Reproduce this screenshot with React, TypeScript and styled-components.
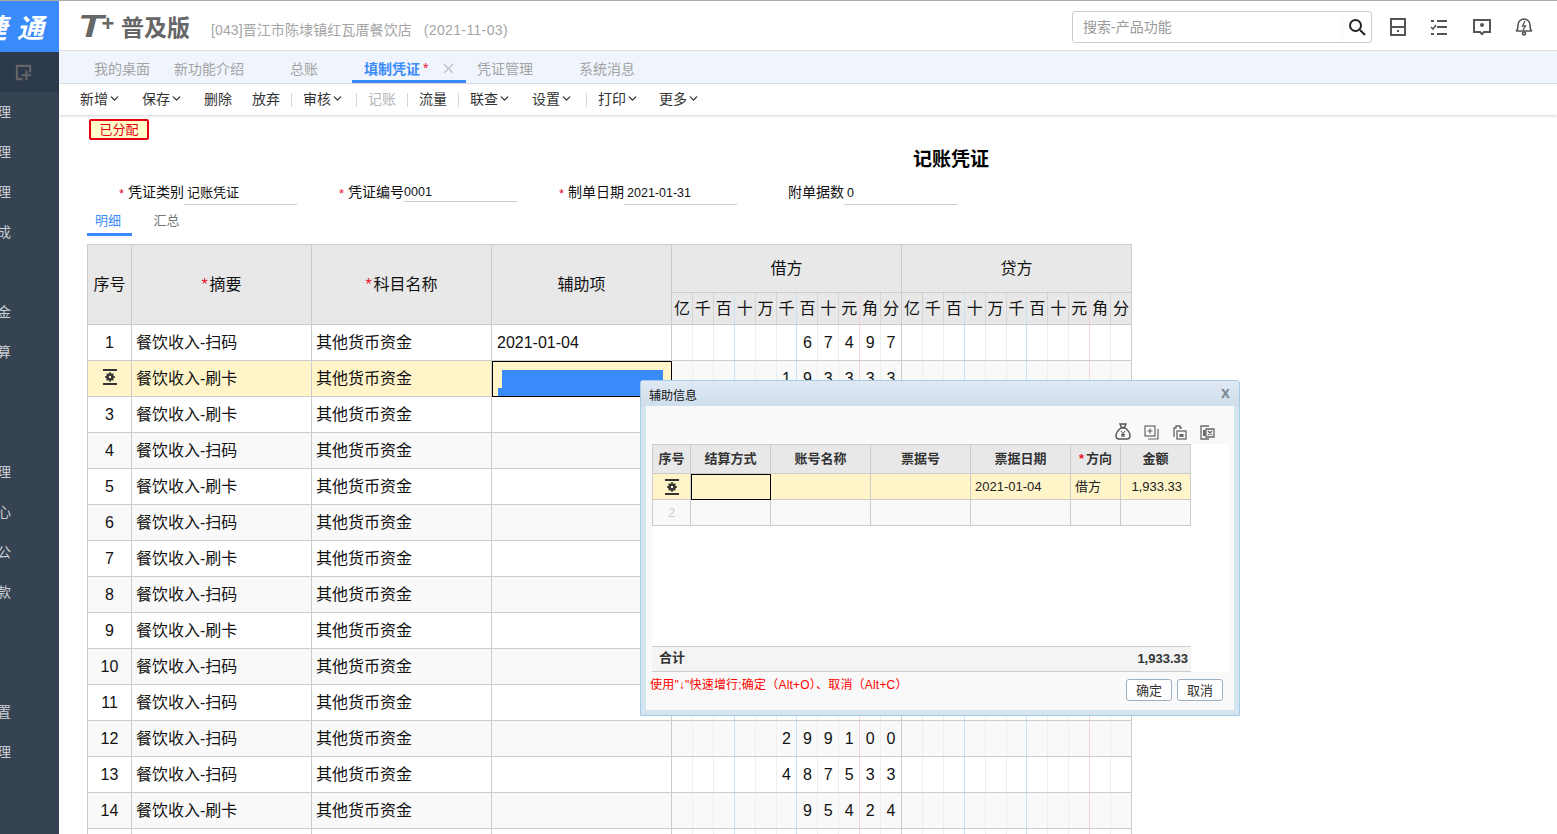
import React from "react"
import styled, { createGlobalStyle } from "styled-components"
import { ChevronDown, X } from "lucide-react"

const FONT = `"Liberation Sans", "Noto Sans CJK SC", sans-serif`
const BLUE = "#3a8bfa"

const GlobalStyle = createGlobalStyle`
	html, body {
		margin: 0;
		padding: 0;
		background: #fff;
		font-family: ${FONT};
		overflow: hidden;
	}
	* {
		box-sizing: border-box;
	}
`

const SIDE_ITEMS = ["理", "理", "理", "成", "", "金", "算", "", "", "理", "心", "公", "款", "", "", "置", "理"]

const TABS = [
	{ label: "我的桌面", width: 81, pad: 10 },
	{ label: "新功能介绍", width: 115, pad: 9 },
	{ label: "总账", width: 72, pad: 10 },
	{ label: "填制凭证", width: 114, pad: 12, active: true },
	{ label: "凭证管理", width: 101, pad: 11 },
	{ label: "系统消息", width: 100, pad: 12 },
]

const TOOLS = [
	{ label: "新增", width: 62, menu: true },
	{ label: "保存", width: 62, menu: true },
	{ label: "删除", width: 48 },
	{ label: "放弃", width: 39, sep: true },
	{ label: "审核", width: 53, menu: true, sep: true },
	{ label: "记账", width: 39, off: true, sep: true },
	{ label: "流量", width: 39, sep: true },
	{ label: "联查", width: 62, menu: true },
	{ label: "设置", width: 54, menu: true, sep: true },
	{ label: "打印", width: 61, menu: true },
	{ label: "更多", width: 50, menu: true },
]

const UNITS = ["亿", "千", "百", "十", "万", "千", "百", "十", "元", "角", "分"]

const ROWS = [
	{ no: "1", text: "餐饮收入-扫码", aux: "2021-01-04", debit: "67497" },
	{ no: "2", text: "餐饮收入-刷卡", debit: "193333", current: true },
	{ no: "3", text: "餐饮收入-刷卡" },
	{ no: "4", text: "餐饮收入-扫码" },
	{ no: "5", text: "餐饮收入-刷卡" },
	{ no: "6", text: "餐饮收入-扫码" },
	{ no: "7", text: "餐饮收入-刷卡" },
	{ no: "8", text: "餐饮收入-扫码" },
	{ no: "9", text: "餐饮收入-刷卡" },
	{ no: "10", text: "餐饮收入-扫码" },
	{ no: "11", text: "餐饮收入-扫码" },
	{ no: "12", text: "餐饮收入-扫码", debit: "299100" },
	{ no: "13", text: "餐饮收入-扫码", debit: "487533" },
	{ no: "14", text: "餐饮收入-刷卡", debit: "95424" },
	{ no: "15", text: "餐饮收入-扫码" },
]

const digitsOf = (value?: string) => {
	const cells: string[] = new Array(11).fill("")
	if (!value) return cells
	value.split("").forEach((d, i) => {
		cells[11 - value.length + i] = d
	})
	return cells
}

const lineColor = (index: number, base: string) => {
	if (index === 10) return "#ccc"
	if (index === 2 || index === 5) return "#c6e3f3"
	if (index === 8) return "#f4d6d8"
	return base
}

const RowMark = () => (
	<svg width="14" height="16" viewBox="0 0 14 16">
		<rect x="0" y="0" width="14" height="2" fill="#333" />
		<rect x="0" y="14" width="14" height="2" fill="#333" />
		<circle cx="7" cy="8" r="3.8" fill="#333" />
		<circle cx="7" cy="8" r="1.2" fill="#fff5c9" />
		<path d="M7 3v2M7 11v2M2 8h2M10 8h2M3.6 4.6 5 6M9 10l1.4 1.4M10.4 4.6 9 6M5 10l-1.4 1.4" stroke="#333" strokeWidth="1.3" />
	</svg>
)

const App: React.FC = () => {
	return (
		<Page>
			<GlobalStyle />
			<Sidebar>
				<Brand>
					<BrandText>捷</BrandText>
					<BrandText>通</BrandText>
				</Brand>
				<SideTop>
					<svg width="17" height="17" viewBox="0 0 18 18" fill="none" stroke="#666" strokeWidth="2.2">
						<path d="M8 16H2V2h14v7" />
						<path d="M12 7v10M7 12h10" />
					</svg>
				</SideTop>
				{SIDE_ITEMS.map((item, i) => (
					<SideItem key={i}>{item}</SideItem>
				))}
			</Sidebar>

			<Main>
				<Header>
					<LogoMark>T</LogoMark>
					<LogoPlus>+</LogoPlus>
					<LogoName>普及版</LogoName>
					<Company>
						[043]晋江市陈埭镇红瓦厝餐饮店&nbsp;&nbsp;&nbsp;<CompanyDate>(2021-11-03)</CompanyDate>
					</Company>
					<Search>
						<SearchHint>搜索-产品功能</SearchHint>
						<SearchButton>
							<svg width="18" height="18" viewBox="0 0 18 18" fill="none" stroke="#222" strokeWidth="2">
								<circle cx="7.5" cy="7.5" r="5.5" />
								<path d="m12 12 5 5" />
							</svg>
						</SearchButton>
					</Search>
					<HeaderIcons>
						<svg width="16" height="18" viewBox="0 0 16 18" fill="none" stroke="#555" strokeWidth="2">
							<rect x="1" y="1" width="14" height="16" />
							<path d="M1 9h14" />
							<rect x="7" y="12" width="2" height="2" fill="#555" stroke="none" />
						</svg>
						<svg width="18" height="18" viewBox="0 0 18 18" fill="none" stroke="#555" strokeWidth="2">
							<path d="M1 3h3M7 3h10M7 9h10M7 16h10M1 16h3" />
							<path d="m1 9 2 2 3-4" strokeWidth="1.5" />
						</svg>
						<svg width="18" height="18" viewBox="0 0 18 18" fill="none" stroke="#555" strokeWidth="2">
							<path d="M1 2h16v12h-6l-2 2-2-2H1z" />
							<circle cx="9" cy="7" r="2" fill="#555" stroke="none" />
						</svg>
						<svg width="18" height="19" viewBox="0 0 18 19" fill="none" stroke="#555" strokeWidth="1.6">
							<path d="M1 14c2-1 2-3 2-6a6 6 0 0 1 12 0c0 3 0 5 2 6z" />
							<path d="M10 4 7.5 9h3L8 13" strokeWidth="1.3" />
							<circle cx="9" cy="16.5" r="1.5" />
						</svg>
					</HeaderIcons>
				</Header>

				<TabBar>
					{TABS.map((tab) => (
						<Tab key={tab.label} $width={tab.width} $pad={tab.pad} $active={tab.active}>
							{tab.label}
							{tab.active && (
								<>
									<TabStar>*</TabStar>
									<TabClose>
										<X size={17} strokeWidth={1.5} color="#bbb" />
									</TabClose>
								</>
							)}
						</Tab>
					))}
				</TabBar>

				<Toolbar>
					{TOOLS.map((tool) => (
						<React.Fragment key={tool.label}>
							<Tool $width={tool.width} $off={tool.off}>
								<ToolLabel>{tool.label}</ToolLabel>
								{tool.menu && <ChevronDown size={13} strokeWidth={2.4} color="#333" />}
							</Tool>
							{tool.sep && <ToolSep />}
						</React.Fragment>
					))}
				</Toolbar>

				<Content>
					<StatusBadge>已分配</StatusBadge>
					<VoucherTitle>记账凭证</VoucherTitle>
					<FormRow>
						<Field $width={220}>
							<FieldStar>*</FieldStar>
							<FieldLabel>凭证类别</FieldLabel>
							<FieldValue>记账凭证</FieldValue>
						</Field>
						<Field $width={220}>
							<FieldStar>*</FieldStar>
							<FieldLabel>凭证编号</FieldLabel>
							<FieldValue $small $raised>0001</FieldValue>
						</Field>
						<Field $width={229}>
							<FieldStar>*</FieldStar>
							<FieldLabel>制单日期</FieldLabel>
							<FieldValue $small>2021-01-31</FieldValue>
						</Field>
						<Field $width={170}>
							<FieldLabel>附单据数</FieldLabel>
							<FieldValue $small>0</FieldValue>
						</Field>
					</FormRow>
					<DetailTabs>
						<DetailTab $active>明细</DetailTab>
						<DetailTab>汇总</DetailTab>
					</DetailTabs>

					<VoucherTable>
						<colgroup>
							<col style={{ width: 44 }} />
							<col style={{ width: 180 }} />
							<col style={{ width: 180 }} />
							<col style={{ width: 180 }} />
							{[...UNITS, ...UNITS].map((_, i) => (
								<col key={i} style={{ width: 230 / 11 }} />
							))}
						</colgroup>
						<thead>
							<HeadRow $height={48}>
								<HeadCell rowSpan={2}>序号</HeadCell>
								<HeadCell rowSpan={2}>
									<Star>*</Star>摘要
								</HeadCell>
								<HeadCell rowSpan={2}>
									<Star>*</Star>科目名称
								</HeadCell>
								<HeadCell rowSpan={2}>辅助项</HeadCell>
								<HeadCell colSpan={11}>借方</HeadCell>
								<HeadCell colSpan={11}>贷方</HeadCell>
							</HeadRow>
							<HeadRow $height={32}>
								{[...UNITS, ...UNITS].map((unit, i) => (
									<UnitCell key={i} $index={i % 11}>
										{unit}
									</UnitCell>
								))}
							</HeadRow>
						</thead>
						<tbody>
							{ROWS.map((row, r) => (
								<BodyRow key={row.no} $current={row.current} $even={r % 2 === 1}>
									<NoCell>{row.current ? <RowMark /> : row.no}</NoCell>
									<TextCell>{row.text}</TextCell>
									<TextCell>其他货币资金</TextCell>
									{row.current ? (
										<ActiveCell>
											<Selection />
										</ActiveCell>
									) : (
										<DateCell>{row.aux}</DateCell>
									)}
									{digitsOf(row.debit).map((d, i) => (
										<DigitCell key={i} $index={i} $even={r % 2 === 1}>
											{d}
										</DigitCell>
									))}
									{digitsOf().map((d, i) => (
										<DigitCell key={i} $index={i} $even={r % 2 === 1}>
											{d}
										</DigitCell>
									))}
								</BodyRow>
							))}
						</tbody>
					</VoucherTable>
				</Content>
			</Main>

			<Dialog>
				<DialogTitle>
					辅助信息
					<DialogClose>x</DialogClose>
				</DialogTitle>
				<DialogBody>
					<DialogTools>
						<svg width="16" height="17" viewBox="0 0 16 17" fill="none" stroke="#555" strokeWidth="1.4">
							<path d="M5 1h6L9.5 4.5h-3z" />
							<path d="M6 5C3 7 1 10 1 13c0 2 1 3 3 3h8c2 0 3-1 3-3 0-3-2-6-5-8z" />
							<path d="m6 8 2 2.5L10 8M8 10.5V14M6 11.5h4M6 13h4" strokeWidth="1" />
						</svg>
						<svg width="15" height="15" viewBox="0 0 15 15" fill="none" stroke="#666" strokeWidth="1.2">
							<rect x="1" y="1" width="10" height="10" />
							<path d="M4 14h10V4M6 3.5v5M3.5 6h5" />
						</svg>
						<svg width="15" height="15" viewBox="0 0 15 15" fill="none" stroke="#666" strokeWidth="1.3">
							<path d="M2 12V3h2V1h4v2h2" />
							<rect x="5" y="6" width="9" height="8" />
							<rect x="7.5" y="9" width="4" height="3" fill="#666" stroke="none" />
						</svg>
						<svg width="15" height="15" viewBox="0 0 15 15" fill="none" stroke="#666" strokeWidth="1.3">
							<path d="M9 1H1v13h8" />
							<rect x="3" y="5" width="2.5" height="6" fill="#666" stroke="none" />
							<path d="M6 4h8v8H6zM8 6l4 4M12 6l-4 4" />
						</svg>
					</DialogTools>
					<GridPanel>
						<DialogTable>
							<colgroup>
								<col style={{ width: 38 }} />
								<col style={{ width: 80 }} />
								<col style={{ width: 100 }} />
								<col style={{ width: 100 }} />
								<col style={{ width: 100 }} />
								<col style={{ width: 50 }} />
								<col style={{ width: 70 }} />
							</colgroup>
							<thead>
								<tr>
									<DialogHead>序号</DialogHead>
									<DialogHead>结算方式</DialogHead>
									<DialogHead>账号名称</DialogHead>
									<DialogHead>票据号</DialogHead>
									<DialogHead>票据日期</DialogHead>
									<DialogHead>
										<Star>*</Star>方向
									</DialogHead>
									<DialogHead>金额</DialogHead>
								</tr>
							</thead>
							<tbody>
								<DialogRow $current>
									<DialogCell $center>
										<RowMark />
									</DialogCell>
									<DialogCell $focus />
									<DialogCell />
									<DialogCell />
									<DialogCell>2021-01-04</DialogCell>
									<DialogCell $cjk>借方</DialogCell>
									<DialogCell $right>1,933.33</DialogCell>
								</DialogRow>
								<DialogRow>
									<DialogCell $center $muted>2</DialogCell>
									<DialogCell />
									<DialogCell />
									<DialogCell />
									<DialogCell />
									<DialogCell />
									<DialogCell />
								</DialogRow>
							</tbody>
						</DialogTable>
						<Summary>
							<SummaryLabel>合计</SummaryLabel>
							<SummaryValue>1,933.33</SummaryValue>
						</Summary>
					</GridPanel>
					<DialogFooter>
						<HintText>使用"↓"快速增行;确定（Alt+O）、取消（Alt+C）</HintText>
						<DialogButton>确定</DialogButton>
						<DialogButton>取消</DialogButton>
					</DialogFooter>
				</DialogBody>
			</Dialog>
		</Page>
	)
}

export default App

const Page = styled.div`
	position: relative;
	display: flex;
	width: 1557px;
	height: 834px;
	overflow: hidden;
	background: #fff;
	border-top: 1px solid #aaa;
`

const Sidebar = styled.aside`
	flex: 0 0 59px;
	width: 59px;
	background: #364352;
	overflow: hidden;
`

const Brand = styled.div`
	display: flex;
	justify-content: flex-end;
	align-items: center;
	gap: 10px;
	height: 51px;
	padding-right: 15px;
	background: ${BLUE};
	overflow: hidden;
`

const BrandText = styled.span`
	flex: none;
	color: #fff;
	font-size: 27px;
	font-weight: 700;
	font-style: italic;
`

const SideTop = styled.div`
	display: flex;
	justify-content: center;
	align-items: center;
	height: 40px;
	padding-right: 13px;
	background: #2d3a4b;
`

const SideItem = styled.div`
	height: 40px;
	margin-left: -3px;
	color: #c9ced4;
	font-size: 14px;
	line-height: 40px;
`

const Main = styled.main`
	flex: 1;
	min-width: 0;
	display: flex;
	flex-direction: column;
`

const Header = styled.header`
	flex: none;
	display: flex;
	align-items: center;
	height: 50px;
	padding: 2px 0 0 19px;
	border-bottom: 1px solid #ddd;
`

const LogoMark = styled.span`
	width: 23px;
	margin-bottom: 1px;
	color: #666;
	font-size: 32px;
	font-weight: 700;
	font-style: italic;
	font-family: "Liberation Sans", sans-serif;
	transform: scaleX(1.3);
	transform-origin: left center;
`

const LogoPlus = styled.span`
	width: 20px;
	margin: -5px 0 0 0;
	color: #666;
	font-size: 22px;
	font-weight: 700;
	font-style: italic;
`

const LogoName = styled.span`
	width: 90px;
	margin-bottom: 2px;
	color: #666;
	font-size: 23px;
	font-weight: 700;
`

const Company = styled.span`
	margin-top: 4px;
	color: #a5a5a5;
	font-size: 14px;
	letter-spacing: 0.1px;
	white-space: nowrap;
`

const CompanyDate = styled.span`
	letter-spacing: 0.35px;
`

const Search = styled.div`
	display: flex;
	align-items: center;
	width: 300px;
	height: 32px;
	margin-left: auto;
	border: 1px solid #ccc;
	border-radius: 3px;
`

const SearchHint = styled.span`
	flex: 1;
	padding: 0 0 2px 10px;
	color: #999;
	font-size: 14px;
`

const SearchButton = styled.div`
	display: flex;
	justify-content: center;
	align-items: center;
	width: 29px;
	height: 100%;
	border-left: 1px solid #f6f6f6;
`

const HeaderIcons = styled.div`
	display: flex;
	align-items: center;
	justify-content: space-between;
	width: 143px;
	margin: 0 24px 0 18px;
`

const TabBar = styled.nav`
	flex: none;
	display: flex;
	height: 33px;
	padding-left: 25px;
	background: #f0f5fd;
	border-bottom: 1px solid #e2e2e2;
`

const Tab = styled.div<{ $width: number; $pad: number; $active?: boolean }>`
	position: relative;
	display: flex;
	align-items: center;
	width: ${(p) => p.$width}px;
	height: 32px;
	padding: 5px 0 0 ${(p) => p.$pad}px;
	color: ${(p) => (p.$active ? BLUE : "#a3a3a3")};
	font-size: 14px;
	font-weight: ${(p) => (p.$active ? 700 : 400)};
	white-space: nowrap;
	border-bottom: 3px solid ${(p) => (p.$active ? BLUE : "transparent")};

	& + &::before {
		content: "";
		position: absolute;
		left: 0;
		top: 9px;
		height: 17px;
		border-left: 1px solid #dfe3e8;
	}
`

const TabStar = styled.span`
	margin-left: 3px;
	color: #e8102a;
	font-weight: 400;
`

const TabClose = styled.span`
	display: flex;
	margin-left: 12px;
`

const Toolbar = styled.div`
	position: relative;
	z-index: 1;
	flex: none;
	display: flex;
	align-items: center;
	height: 31px;
	padding-left: 21px;
	background: #fff;
	box-shadow: 0 1px 3px rgba(0, 0, 0, 0.18);
`

const Tool = styled.div<{ $width: number; $off?: boolean }>`
	display: flex;
	align-items: center;
	width: ${(p) => p.$width}px;
	padding-bottom: 2px;
	color: ${(p) => (p.$off ? "#b5b5b5" : "#333")};
	font-size: 14px;
	white-space: nowrap;
`

const ToolLabel = styled.span`
	margin-bottom: 2px;
`

const ToolSep = styled.span`
	width: 1px;
	height: 14px;
	margin-right: 11px;
	background: #d5d5d5;
`

const Content = styled.div`
	flex: 1;
	min-height: 0;
	padding: 4px 0 0 28px;
	overflow: hidden;
`

const StatusBadge = styled.div`
	width: 60px;
	height: 21px;
	margin-left: 2px;
	border: 2px solid #e60012;
	border-radius: 2px;
	background: #ffffcc;
	color: #e60012;
	font-size: 13px;
	line-height: 17px;
	text-align: center;
`

const VoucherTitle = styled.h1`
	width: 1728px;
	margin: 8px 0 0;
	height: 24px;
	color: #000;
	font-size: 19px;
	font-weight: 700;
	line-height: 24px;
	text-align: center;
`

const FormRow = styled.div`
	display: flex;
	align-items: flex-end;
	height: 33px;
	padding-left: 32px;
`

const Field = styled.div<{ $width: number }>`
	display: flex;
	align-items: flex-end;
	width: ${(p) => p.$width}px;
	color: #111;
	font-size: 13px;
`

const Star = styled.span`
	margin-right: 2px;
	color: #e8102a;
`

const FieldStar = styled(Star)`
	margin: 0 4px 4px 0;
`

const FieldLabel = styled.span`
	padding-bottom: 2px;
	font-size: 14px;
	line-height: 21px;
	white-space: nowrap;
`

const FieldValue = styled.span<{ $small?: boolean; $raised?: boolean }>`
	width: 113px;
	height: ${(p) => (p.$raised ? 18 : 21)}px;
	margin-bottom: ${(p) => (p.$raised ? 3 : 0)}px;
	padding-left: ${(p) => (p.$raised ? 0 : 3)}px;
	border-bottom: 1px solid #ccc;
	font-size: ${(p) => (p.$small ? 12.5 : 13)}px;
	line-height: ${(p) => (p.$raised ? 16 : p.$small ? 19 : 18)}px;
`

const DetailTabs = styled.div`
	display: flex;
	height: 31px;
`

const DetailTab = styled.div<{ $active?: boolean }>`
	width: 45px;
	margin: 0 10px 0 ${(p) => (p.$active ? 0 : 2)}px;
	padding: 8px ${(p) => (p.$active ? 3 : 0)}px 0 0;
	color: ${(p) => (p.$active ? BLUE : "#777")};
	font-size: 13px;
	line-height: 16px;
	text-align: center;
	border-bottom: 3px solid ${(p) => (p.$active ? BLUE : "transparent")};
`

const VoucherTable = styled.table`
	width: 1045px;
	margin-top: 8px;
	border-collapse: collapse;
	table-layout: fixed;
	color: #111;
	font-size: 16px;
`

const HeadRow = styled.tr<{ $height: number }>`
	height: ${(p) => p.$height}px;
`

const HeadCell = styled.th`
	padding: 0 0 4px;
	border: 1px solid #ccc;
	background: #e8e8e8;
	font-weight: 400;
	text-align: center;
`

const UnitCell = styled(HeadCell)<{ $index: number }>`
	border-right-color: ${(p) => lineColor(p.$index, "#d4d4d4")};
	overflow: hidden;
`

const BodyRow = styled.tr<{ $current?: boolean; $even?: boolean }>`
	height: 36px;
	background: ${(p) => (p.$current ? "#fff5c9" : p.$even ? "#f9f9f9" : "#fff")};
`

const NoCell = styled.td`
	padding: 0;
	border: 1px solid #ccc;
	text-align: center;

	svg {
		display: block;
		margin: -4px auto 0;
	}
`

const TextCell = styled.td`
	padding: 0 4px 4px;
	border: 1px solid #ccc;
	white-space: nowrap;
`

const DateCell = styled.td`
	padding: 0 5px;
	border: 1px solid #ccc;
	white-space: nowrap;
`

const ActiveCell = styled.td`
	padding: 0;
	border: 1px solid #ccc;
	outline: 1px solid #000;
	outline-offset: -1px;
	vertical-align: bottom;
`

const Selection = styled.div`
	position: relative;
	height: 26px;
	margin: 0 8px 0 10px;
	background: ${BLUE};

	&::before {
		content: "";
		position: absolute;
		left: -4px;
		bottom: 0;
		width: 4px;
		height: 8px;
		background: ${BLUE};
	}
`

const DigitCell = styled.td<{ $index: number; $even?: boolean }>`
	padding: 0;
	border: 1px solid #ccc;
	border-left-color: #eee;
	border-right-color: ${(p) => lineColor(p.$index, "#eee")};
	background: ${(p) => (p.$even ? "#f9f9f9" : "#fff")};
	text-align: center;
`

const Dialog = styled.section`
	position: absolute;
	left: 640px;
	top: 379px;
	display: flex;
	flex-direction: column;
	width: 600px;
	height: 336px;
	padding: 0 5px 5px;
	background: #d6e4f0;
	border: 1px solid #a3cde6;
	border-radius: 3px 3px 0 0;
`

const DialogTitle = styled.div`
	flex: none;
	position: relative;
	height: 25px;
	margin: 0 -5px;
	padding-left: 8px;
	background: linear-gradient(#dfe9f4, #cfdeec);
	color: #111;
	font-size: 12px;
	line-height: 30px;
`

const DialogClose = styled.span`
	position: absolute;
	right: 9px;
	top: 0;
	color: #7c8792;
	font-size: 16px;
	font-weight: 700;
	line-height: 24px;
`

const DialogBody = styled.div`
	flex: 1;
	min-height: 0;
	display: flex;
	flex-direction: column;
	background: #f9f9f9;
`

const DialogTools = styled.div`
	flex: none;
	display: flex;
	justify-content: flex-end;
	align-items: flex-end;
	gap: 13px;
	height: 38px;
	padding: 0 19px 4px 0;
`

const GridPanel = styled.div`
	flex: none;
	display: flex;
	flex-direction: column;
	justify-content: space-between;
	width: 577px;
	height: 228px;
	margin-left: 6px;
	background: #fff;
`

const DialogTable = styled.table`
	width: 538px;
	border-collapse: collapse;
	table-layout: fixed;
	color: #333;
	font-size: 13px;
`

const DialogHead = styled.th`
	height: 29px;
	padding: 0 0 4px;
	border: 1px solid #ccc;
	background: #e8e8e8;
	font-weight: 700;
	text-align: center;
`

const DialogRow = styled.tr<{ $current?: boolean }>`
	height: 26px;
	background: ${(p) => (p.$current ? "#fff5c9" : "#f9f9f9")};
`

const DialogCell = styled.td<{ $center?: boolean; $right?: boolean; $muted?: boolean; $focus?: boolean; $cjk?: boolean }>`
	padding: 0 ${(p) => (p.$right ? 8 : 4)}px ${(p) => (p.$cjk ? 2 : 0)}px 4px;
	border: 1px solid #ccc;
	color: ${(p) => (p.$muted ? "#ccc" : "#222")};
	text-align: ${(p) => (p.$center ? "center" : p.$right ? "right" : "left")};
	${(p) => p.$focus && "outline: 1px solid #000; outline-offset: -1px;"}

	svg {
		display: block;
		margin: 0 auto;
	}
`

const Summary = styled.div`
	display: flex;
	justify-content: space-between;
	align-items: center;
	width: 539px;
	height: 26px;
	padding: 0 3px 2px 7px;
	border-top: 1px solid #ccc;
	border-bottom: 1px solid #ccc;
	background: #f4f4f4;
	color: #333;
	font-size: 13px;
`

const SummaryLabel = styled.span`
	margin-bottom: 3px;
	font-weight: 700;
`

const SummaryValue = styled.span`
	font-weight: 700;
	font-size: 13px;
`

const DialogFooter = styled.div`
	flex: 1;
	display: flex;
	align-items: flex-start;
	gap: 5px;
	padding: 7px 11px 0 4px;
`

const HintText = styled.span`
	flex: 1;
	margin-top: -4px;
	color: #f00;
	font-size: 12px;
	letter-spacing: 0.2px;
	white-space: nowrap;
`

const DialogButton = styled.button`
	width: 46px;
	height: 22px;
	padding: 0 0 2px;
	background: #fff;
	border: 1px solid #9fb0c2;
	border-radius: 3px;
	color: #333;
	font-family: ${FONT};
	font-size: 13px;
`
